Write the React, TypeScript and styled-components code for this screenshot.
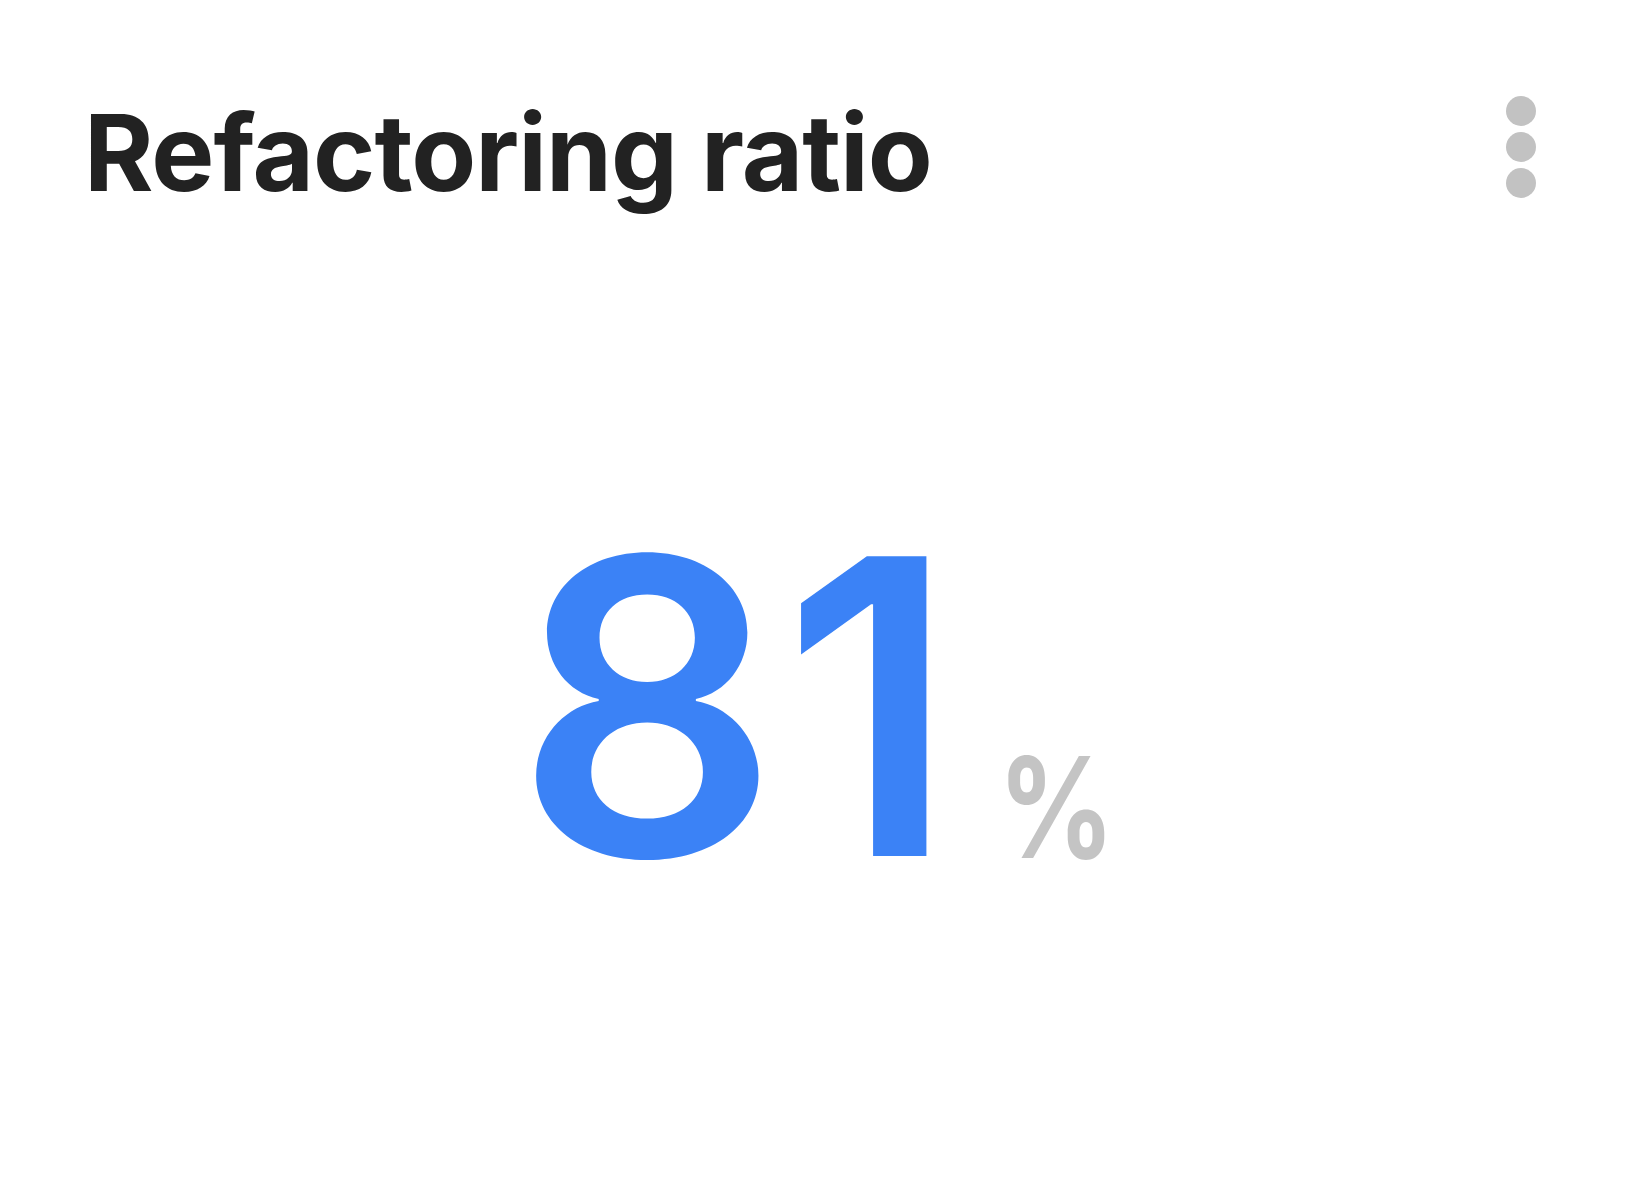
import React from "react";
import styled, { createGlobalStyle } from "styled-components";

const Global = createGlobalStyle`
  html, body { margin: 0; padding: 0; background: #ffffff; }
  body { font-family: Inter, "Noto Sans", sans-serif; }
`;

const Card = styled.div`
  box-sizing: border-box;
  width: 1626px;
  height: 1200px;
  padding: 90px 90px 0 84px;
  display: flex;
  flex-direction: column;
  background: #ffffff;
`;

const Header = styled.div`
  display: flex;
  align-items: flex-start;
  justify-content: space-between;
`;

const Title = styled.h1`
  margin: 0;
  font-family: Inter, sans-serif;
  font-weight: 700;
  font-size: 106px;
  line-height: 126px;
  letter-spacing: -1px;
  color: #222222;
`;

const MenuButton = styled.button`
  border: 0;
  background: transparent;
  padding: 0;
  margin-top: 6px;
  display: flex;
  flex-direction: column;
  gap: 6px;
  cursor: pointer;
`;

const Dot = styled.span`
  display: block;
  width: 30px;
  height: 30px;
  border-radius: 50%;
  background: #c2c2c2;
`;

const ValueArea = styled.div`
  flex: 1;
  display: flex;
  justify-content: center;
  align-items: flex-start;
  padding-top: 284px;
`;

const ValueRow = styled.div`
  display: flex;
  align-items: baseline;
  gap: 39px;
`;

const Number = styled.span`
  font-family: Inter, sans-serif;
  font-weight: 600;
  font-size: 412px;
  line-height: 1;
  letter-spacing: 3px;
  color: #3b82f6;
`;

const Unit = styled.span`
  display: inline-block;
  font-family: Inter, sans-serif;
  font-weight: 700;
  font-size: 140px;
  line-height: 1;
  color: #c4c4c4;
  transform: scaleX(0.82) translateY(2px);
  transform-origin: left bottom;
  margin-right: -36px;
`;

export default function App() {
  return (
    <>
      <Global />
      <Card>
        <Header>
          <Title>Refactoring ratio</Title>
          <MenuButton aria-label="More options">
            <Dot />
            <Dot />
            <Dot />
          </MenuButton>
        </Header>
        <ValueArea>
          <ValueRow>
            <Number>81</Number>
            <Unit>%</Unit>
          </ValueRow>
        </ValueArea>
      </Card>
    </>
  );
}
